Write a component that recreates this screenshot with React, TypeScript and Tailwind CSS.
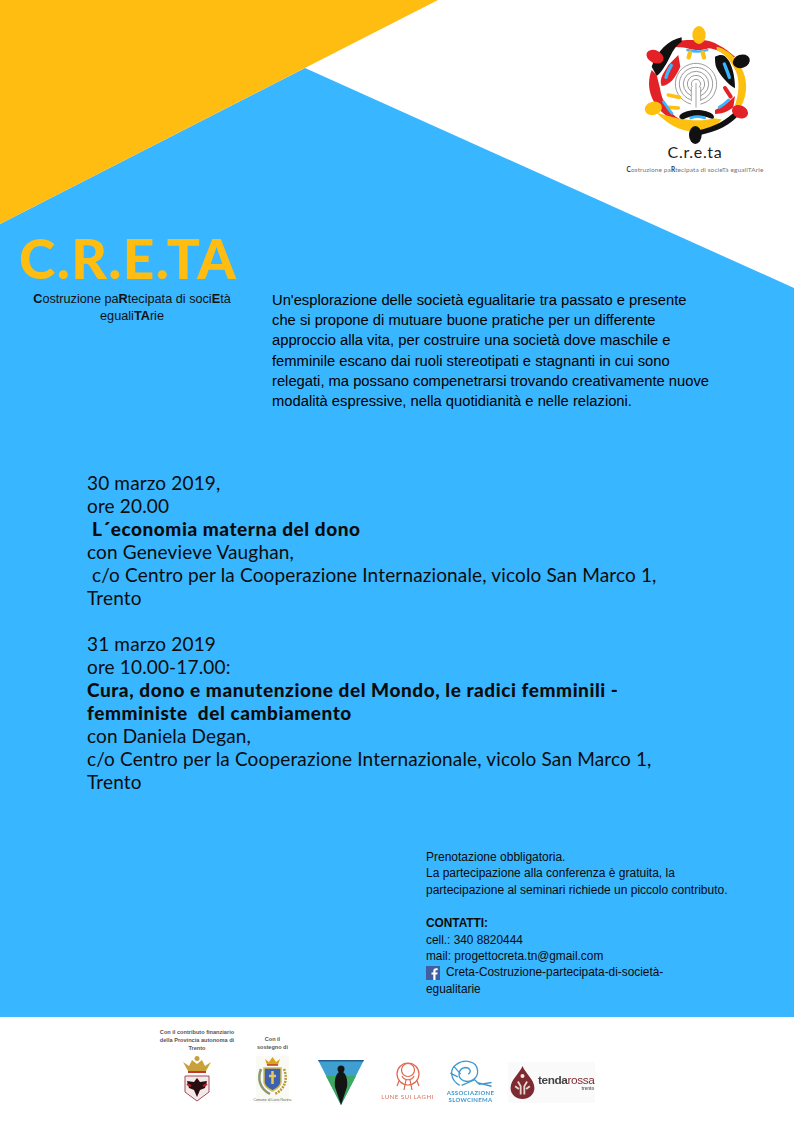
const sans = { fontFamily: '"Liberation Sans", Arial, sans-serif' };
const lato = { fontFamily: 'Lato, sans-serif' };

function CretaLogo() {
  return (
    <div className="w-[194px] flex flex-col items-center">
      <svg className="blur-[0.4px]" width="194" height="146" viewBox="0 0 582 438" fill="none" strokeLinecap="round">
        {/* labirinto */}
        <g stroke="#777" strokeWidth="2">
          <circle cx="288" cy="252" r="62" pathLength="360" strokeDasharray="330 30" transform="rotate(105 288 252)" />
          <circle cx="288" cy="252" r="50" pathLength="360" strokeDasharray="320 40" transform="rotate(110 288 252)" />
          <circle cx="288" cy="252" r="38" pathLength="360" strokeDasharray="310 50" transform="rotate(115 288 252)" />
          <circle cx="288" cy="252" r="26" pathLength="360" strokeDasharray="290 70" transform="rotate(125 288 252)" />
          <circle cx="288" cy="252" r="14" pathLength="360" strokeDasharray="250 110" transform="rotate(145 288 252)" />
          <path d="M288 250V322M274 262V302M302 262V302" />
        </g>
        {/* figura in alto */}
        <path d="M205 135C240 115 280 120 297 122C330 115 370 140 405 170L395 178C370 158 345 146 325 145C310 152 280 152 262 145C245 140 225 145 205 135Z" fill="#e32228" />
        <path d="M262 150C285 156 305 156 322 150" stroke="#38b6ff" strokeWidth="7" />
        <path d="M266 172L270 158M312 172L308 158" stroke="#fdc010" strokeWidth="13" />
        {/* figura a sinistra in alto */}
        <path d="M245 112C205 120 170 155 155 200L170 228C185 215 195 200 210 170C220 150 225 140 245 125Z" fill="#111" />
        <path d="M235 165L241 200C225 235 210 255 185 258C175 235 195 215 205 195Z" fill="#e32228" />
        <path d="M214 196C207 208 201 220 198 232" stroke="#38b6ff" strokeWidth="10" />
        {/* figura a sinistra in basso */}
        <path d="M155 210C135 260 150 330 240 372L240 358C205 340 185 300 180 265L170 225Z" fill="#e32228" />
        <path d="M205 285L238 292M205 322L235 324" stroke="#fdc010" strokeWidth="11" />
        <path d="M190 305C198 315 205 328 216 340" stroke="#38b6ff" strokeWidth="8" />
        {/* figura in basso */}
        <path d="M170 338C200 370 240 395 285 395C320 395 350 380 365 358L340 355C310 365 270 360 250 358C225 355 200 345 170 338Z" fill="#fdc010" />
        <path d="M240 345C260 325 320 325 340 345C345 355 340 358 330 355C310 345 270 345 250 358C240 358 235 352 240 345Z" fill="#111" />
        <path d="M272 354C285 349 300 349 314 354" stroke="#38b6ff" strokeWidth="8" />
        <path d="M300 405C350 395 395 375 420 340L410 330C380 360 345 380 300 390Z" fill="#111" />
        {/* figura a destra */}
        <path d="M350 140C400 150 445 215 438 270C435 295 430 305 425 315L405 315C415 290 420 250 410 220C395 185 375 160 350 150Z" fill="#fdc010" />
        <path d="M345 170C365 160 375 165 385 180C395 195 405 225 405 265C385 255 360 225 350 205C345 195 345 180 345 170Z" fill="#111" />
        <path d="M373 192C378 205 384 218 388 232" stroke="#38b6ff" strokeWidth="10" />
        <path d="M375 264L392 290" stroke="#e32228" strokeWidth="12" />
        <path d="M345 330C365 322 385 308 405 288L400 322C385 335 365 342 345 342Z" fill="#e32228" />
        <path d="M358 322C368 316 378 308 386 300" stroke="#38b6ff" strokeWidth="9" />
        {/* teste */}
        <ellipse cx="297" cy="105" rx="20" ry="27" fill="#fdc010" />
        <ellipse cx="424" cy="184" rx="26" ry="20" fill="#111" transform="rotate(-20 424 184)" />
        <ellipse cx="420" cy="335" rx="25" ry="19" fill="#e32228" transform="rotate(25 420 335)" />
        <ellipse cx="286" cy="405" rx="19" ry="27" fill="#111" />
        <ellipse cx="160" cy="325" rx="26" ry="20" fill="#fdc010" transform="rotate(-15 160 325)" />
        <ellipse cx="165" cy="170" rx="27" ry="19" fill="#e32228" transform="rotate(25 165 170)" />
      </svg>
      <p className="text-[16px] leading-[20px] tracking-[0.7px] text-[#222] mt-[-4px] mr-[4px]" style={lato}>C.r.e.ta</p>
      <p className="text-[6.5px] leading-[10px] text-[#777] mt-[3px] tracking-[0.1px] whitespace-nowrap mr-[4px]" style={lato}>
        <b className="text-[#333]">C</b>ostruzione pa<b className="text-[#333]">R</b>tecipata di socieTà egualiTArie
      </p>
    </div>
  );
}

function Stemma() {
  return (
    <svg className="blur-[0.3px]" width="30" height="46" viewBox="0 0 30 46">
      <path d="M1 6L7 10L10 4L15 8L20 4L23 10L29 6L24 15H6Z" fill="#c9a13b" />
      <circle cx="15" cy="2.5" r="2.5" fill="#c9a13b" />
      <path d="M6 16H24" stroke="#c0392b" strokeWidth="2" />
      <path d="M3 20H27V36L15 45L3 36Z" fill="#f4e9e9" stroke="#a34a5a" strokeWidth="1" />
      <path d="M15 22L18 26L25 25L23 32L18 34L15 41L12 34L7 32L5 25L12 26Z" fill="#2a0d10" />
      <path d="M5 28L9 30M25 28L21 30" stroke="#b3202c" strokeWidth="2" />
    </svg>
  );
}

function Comune() {
  return (
    <div className="w-[33px] flex flex-col items-center bg-[#fafaf5] blur-[0.3px]">
      <svg width="33" height="42" viewBox="0 0 33 42">
        <path d="M9 3L13 6L16.5 1L20 6L24 3L22 9H11Z" fill="#d9a520" />
        <path d="M11 9H22" stroke="#c0392b" strokeWidth="1.5" />
        <path d="M8 12H25V26C25 31 20 33 16.5 35C13 33 8 31 8 26Z" fill="#3d62ad" stroke="#d8bb52" strokeWidth="1.5" />
        <path d="M16.5 15V28M13 20H20" stroke="#e9c65a" strokeWidth="2.5" />
        <path d="M5 13C1 23 4 33 14 38" stroke="#8a9870" strokeWidth="2.5" fill="none" />
        <path d="M28 13C32 23 29 33 19 38" stroke="#b59a3a" strokeWidth="2.5" fill="none" strokeDasharray="2 1" />
      </svg>
      <p className="text-[3.5px] leading-[5px] text-[#666] whitespace-nowrap" style={sans}>Comune di Lavis Rovina</p>
    </div>
  );
}

function Triangolo() {
  return (
    <svg className="blur-[0.3px]" width="46" height="45" viewBox="0 0 46 45">
      <path d="M0 0H46L23 45Z" fill="#3f9fd0" />
      <path d="M8 16L38 16L23 45Z" fill="#3da860" />
      <path d="M23 45L17 27C16 20 18 12 23 11C28 12 30 20 29 27Z" fill="#141414" />
      <circle cx="23" cy="9" r="3.5" fill="#141414" />
      <path d="M0 0H46L45 1.5H1Z" fill="#1d5f8a" />
    </svg>
  );
}

function Lune() {
  return (
    <div className="w-[51px] flex flex-col items-center blur-[0.3px]">
      <svg width="24" height="29" viewBox="0 0 24 29" fill="none" stroke="#e0674d" strokeWidth="1.2">
        <circle cx="12" cy="12" r="11" />
        <circle cx="12" cy="8" r="6.5" />
        <path d="M6 14C8 19 16 19 18 14M10 18L8 28M14 18L16 28M3 19L1 24M21 19L23 24" />
      </svg>
      <p className="text-[6.2px] leading-[10px] mt-[1px] text-[#d9715c] tracking-[0.4px] whitespace-nowrap" style={lato}>LUNE SUI LAGHI</p>
    </div>
  );
}

function Slowcinema() {
  return (
    <div className="w-[47px] flex flex-col items-center blur-[0.3px]">
      <svg width="47" height="30" viewBox="0 0 47 32" fill="none" stroke="#3f97cf" strokeWidth="1.4">
        <path d="M12 27C3 22 0 11 8 5C16 -1 30 0 31 11C32 19 24 25 16 22C9 19 10 9 18 8C23 8 25 13 21 15" />
        <path d="M6 7L13 15M2 14L10 18M14 27L28 21L33 26L46 24M30 24L46 28" />
      </svg>
      <p className="text-[6px] leading-[6.5px] font-bold text-[#3f97cf] tracking-[0.3px] whitespace-nowrap text-center" style={lato}>
        ASSOCIAZIONE<br />SLOWCINEMA
      </p>
    </div>
  );
}

function TendaRossa() {
  return (
    <div className="w-[87px] h-[41px] flex items-center gap-[3px] bg-[#fafafa] pl-[2px] blur-[0.3px]">
      <svg width="25" height="33" viewBox="0 0 26 36">
        <path d="M13 0C16 8 26 15 26 24C26 31 20 36 13 36C6 36 0 31 0 24C0 15 10 8 13 0Z" fill="#7d2a30" />
        <circle cx="13" cy="11" r="2.2" fill="#f3e6e3" />
        <path d="M8 17L11 22V31M18 17L15 22V31M5 22L9 25M21 22L17 25" stroke="#e9d6d0" strokeWidth="2" fill="none" />
      </svg>
      <div className="flex flex-col items-end">
        <p className="text-[11.8px] leading-[12px] text-[#444] tracking-[-0.4px] whitespace-nowrap" style={sans}>
          <b>tenda</b><span className="text-[#7d2a30]">rossa</span>
        </p>
        <p className="text-[4.5px] leading-[5px] font-bold text-[#666]" style={sans}>trento</p>
      </div>
    </div>
  );
}

export default function App() {
  return (
    <div className="relative w-[794px] h-[1123px] overflow-hidden bg-white">
      {/* sfondo del manifesto */}
      <svg className="absolute left-0 top-0" width="794" height="1017" viewBox="0 0 794 1017">
        <polygon points="305,68 794,288 794,1017 0,1017 0,224" fill="#38b6ff" />
        <polygon points="0,0 438,0 0,224" fill="#ffbd12" />
      </svg>

      <div className="relative flex flex-col h-full">
        <div className="h-[1017px] flex flex-col">
          <div className="flex justify-end h-[230px]">
            <CretaLogo />
          </div>

          <div className="flex">
            <div className="w-[272px] shrink-0">
              <h1 className="mt-[3px] pl-[19px] text-[55px] leading-[50px] font-black tracking-[1.4px] text-[#ffbd12] whitespace-nowrap" style={lato}>C.R.E.TA</h1>
              <p className="mt-[8px] ml-[22px] w-[220px] text-center text-[12.7px] leading-[17px] text-[#111]" style={sans}>
                <b>C</b>ostruzione pa<b>R</b>tecipata di soci<b>E</b>tà<br />eguali<b>TA</b>rie
              </p>
            </div>
            <p className="pt-[60px] text-[14.75px] leading-[20.2px] text-black whitespace-nowrap" style={sans}>
              Un'esplorazione delle società egualitarie tra passato e presente<br />
              che si propone di mutuare buone pratiche per un differente<br />
              approccio alla vita, per costruire una società dove maschile e<br />
              femminile escano dai ruoli stereotipati e stagnanti in cui sono<br />
              relegati, ma possano compenetrarsi trovando creativamente nuove<br />
              modalità espressive, nella quotidianità e nelle relazioni.
            </p>
          </div>

          <div className="pl-[87px] pt-[60px] text-[19px] leading-[23px] tracking-[0.15px] text-[#0c0c0c] whitespace-nowrap" style={lato}>
            <p>30 marzo 2019,</p>
            <p>ore 20.00</p>
            <p className="font-black tracking-[0.55px]">&nbsp;L´economia materna del dono</p>
            <p>con Genevieve Vaughan,</p>
            <p>&nbsp;c/o Centro per la Cooperazione Internazionale, vicolo San Marco 1,</p>
            <p>Trento</p>
            <p className="mt-[23px]">31 marzo 2019</p>
            <p>ore 10.00-17.00:</p>
            <p className="font-black tracking-[0.55px]">Cura, dono e manutenzione del Mondo, le radici femminili -</p>
            <p className="font-black tracking-[0.55px]">femministe&nbsp; del cambiamento</p>
            <p>con Daniela Degan,</p>
            <p>c/o Centro per la Cooperazione Internazionale, vicolo San Marco 1,</p>
            <p>Trento</p>
          </div>

          <div className="pl-[426px] pt-[56px] text-[12px] leading-[16.2px] text-[#0a0a0a] whitespace-nowrap" style={sans}>
            <p>Prenotazione obbligatoria.</p>
            <p>La partecipazione alla conferenza è gratuita, la</p>
            <p>partecipazione al seminari richiede un piccolo contributo.</p>
            <div className="mt-[17px] text-[11.85px]">
              <p className="font-bold">CONTATTI:</p>
              <p className="mt-[1px]">cell.: 340 8820444</p>
              <p>mail: progettocreta.tn@gmail.com</p>
              <p className="flex items-center gap-[6px]">
                <svg width="14" height="14" viewBox="0 0 14 14">
                  <rect width="14" height="14" fill="#3f5f9e" />
                  <path d="M9.5 14V8.5H11.3L11.6 6.4H9.5V5.2C9.5 4.6 9.7 4.2 10.5 4.2H11.7V2.3C11.4 2.3 10.8 2.2 10 2.2C8.4 2.2 7.3 3.2 7.3 5V6.4H5.5V8.5H7.3V14Z" fill="#fff" />
                </svg>
                Creta-Costruzione-partecipata-di-società-
              </p>
              <p>egualitarie</p>
            </div>
          </div>
        </div>

        {/* loghi */}
        <div className="h-[106px] bg-white flex items-start pl-[157px]">
          <div className="w-[80px] flex flex-col items-center pt-[11px]">
            <p className="text-[5.6px] leading-[8px] font-bold text-[#555] text-center whitespace-nowrap" style={sans}>
              Con il contributo finanziario<br />della Provincia autonoma di<br />Trento
            </p>
            <div className="mt-[4px]"><Stemma /></div>
          </div>
          <div className="w-[33px] ml-[19px] flex flex-col items-center pt-[18px]">
            <p className="text-[5.5px] leading-[8px] font-bold text-[#555] text-center whitespace-nowrap" style={sans}>
              Con il<br />sostegno di
            </p>
            <div className="mt-[5px]"><Comune /></div>
          </div>
          <div className="ml-[29px] pt-[43px]"><Triangolo /></div>
          <div className="ml-[18px] pt-[45px]"><Lune /></div>
          <div className="ml-[14px] pt-[43px]"><Slowcinema /></div>
          <div className="ml-[14px] pt-[45px]"><TendaRossa /></div>
        </div>
      </div>
    </div>
  );
}
